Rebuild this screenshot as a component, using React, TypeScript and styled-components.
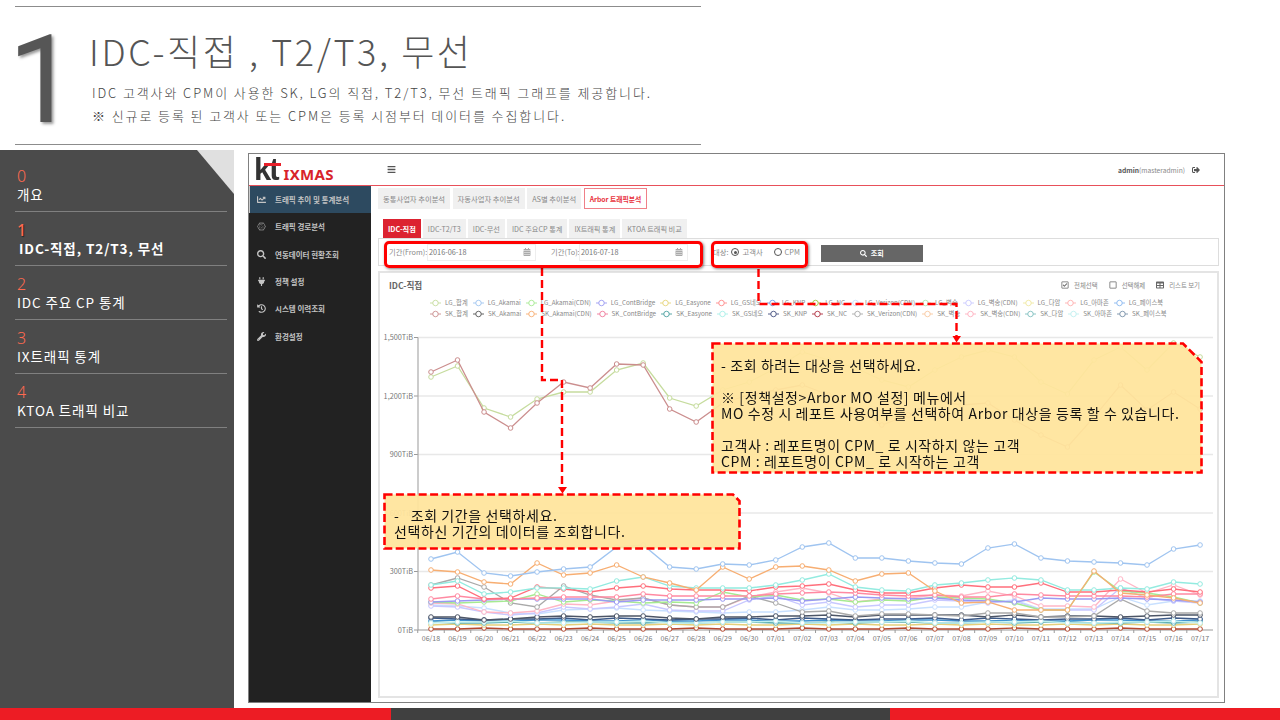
import React from "react"
import styled, { createGlobalStyle } from "styled-components"
import {
  FaBars, FaCalendarAlt, FaChartLine, FaConnectdevelop, FaHistory, FaPlug, FaRegCheckSquare,
  FaRegSquare, FaSearch, FaSignOutAlt, FaTable, FaWrench,
} from "react-icons/fa"

const KR = `"Noto Sans CJK KR", "Noto Sans", sans-serif`

const GlobalStyle = createGlobalStyle`
  html, body { margin: 0; padding: 0; background: #fff; }
  * { box-sizing: border-box; }
`

// plot heights are px above the x axis (1px is about 5.1 TiB)
const wobble = (base: number, step: number[]) => Array.from({ length: 30 }, (_, i) => base + step[i % step.length])

const lines: { color: string; h: number[] }[] = [
  { color: "#b5482f", h: wobble(1, [0, 0, 1, 0]) },
  { color: "#e6cf7a", h: wobble(5, [0, 1, 0, 0, 1]) },
  { color: "#5fb0b0", h: wobble(7, [1, 0, 0, 1, 0, 1]) },
  { color: "#3f92d0", h: wobble(9, [0, 1, 0, 0, 1, 1, 0]) },
  { color: "#3d5a88", h: wobble(10, [2, 1, 0, 1, 1, 2, 0]) },
  { color: "#c0f0f0", h: wobble(7, [0, 1, 1, 2, 0]) },
  { color: "#c8e0ff", h: [25, 24, 22, 17, 16, 20, 21, 22, 20, 19, 18, 17, 18, 18, 20, 23, 20, 20, 21, 23, 23, 28, 30, 21, 21, 21, 33, 25, 29, 29] },
  { color: "#4c5566", h: [13, 13, 10, 11, 13, 14, 13, 14, 14, 12, 11, 13, 13, 14, 14, 15, 13, 15, 15, 15, 15, 13, 15, 13, 14, 14, 13, 14, 15, 15] },
  { color: "#c8c8ff", h: [24, 23, 18, 15, 17, 23, 21, 23, 26, 20, 19, 19, 30, 34, 25, 28, 23, 25, 25, 30, 29, 27, 29, 20, 20, 20, 42, 32, 29, 27] },
  { color: "#ffb6c6", h: [27, 26, 18, 17, 19, 26, 25, 29, 32, 25, 23, 23, 33, 38, 42, 37, 28, 31, 32, 35, 34, 39, 34, 24, 24, 23, 51, 37, 45, 35] },
  { color: "#a9a9a9", h: [45, 52, 43, 27, 23, 44, 35, 30, 32, 25, 23, 23, 34, 27, 18, 19, 14, 16, 16, 15, 14, 17, 17, 13, 13, 14, 31, 19, 17, 17] },
  { color: "#a6ea92", h: [28, 27, 28, 29, 36, 28, 30, 29, 27, 28, 27, 38, 33, 35, 30, 31, 28, 30, 29, 33, 32, 31, 27, 20, 20, 58, 39, 37, 33, 27] },
  { color: "#9a9af2", h: [28, 29, 30, 31, 31, 31, 31, 28, 30, 30, 30, 31, 31, 32, 29, 31, 33, 32, 31, 32, 30, 29, 28, 32, 31, 31, 32, 31, 30, 28] },
  { color: "#ff8aa2", h: [31, 34, 31, 31, 32, 33, 33, 33, 36, 34, 34, 34, 34, 36, 37, 38, 37, 35, 34, 35, 33, 33, 36, 35, 34, 34, 34, 33, 36, 36] },
  { color: "#ff6f7c", h: [42, 44, 31, 32, 43, 41, 38, 42, 44, 41, 40, 40, 39, 43, 44, 46, 40, 37, 37, 42, 45, 43, 43, 47, 38, 38, 40, 38, 41, 38] },
  { color: "#93ebe0", h: [45, 49, 36, 38, 42, 42, 41, 49, 53, 44, 42, 42, 42, 45, 50, 56, 43, 40, 39, 45, 47, 50, 52, 50, 40, 40, 42, 41, 48, 46] },
  { color: "#f7ae72", h: [60, 58, 48, 46, 67, 55, 57, 65, 53, 47, 40, 63, 51, 63, 64, 60, 49, 56, 57, 39, 27, 28, 20, 20, 20, 59, 37, 35, 32, 27] },
  { color: "#9fc4f0", h: [71, 78, 57, 54, 58, 61, 63, 83, 85, 63, 61, 66, 65, 70, 83, 87, 72, 72, 69, 67, 66, 82, 86, 72, 69, 68, 67, 65, 81, 85] },
  { color: "#c6dc9e", h: [253, 264, 222, 213, 231, 238, 238, 260, 267, 232, 224, 240, 248, 262, 278, 270, 262, 250, 243, 260, 273, 280, 273, 248, 236, 270, 283, 260, 287, 273] },
  { color: "#cb8e8e", h: [258, 270, 218, 202, 227, 248, 242, 266, 265, 221, 208, 227, 235, 240, 245, 235, 220, 205, 215, 230, 225, 227, 210, 195, 183, 213, 245, 220, 238, 221] },
]

const legendRows = [
  [["LG_합계", "#c6dc9e"], ["LG_Akamai", "#9fc4f0"], ["LG_Akamai(CDN)", "#a6ea92"], ["LG_ContBridge", "#9a9af2"], ["LG_Easyone", "#e6d47a"], ["LG_GS네오", "#ff8a8a"], ["LG_KNP", "#6f9fe8"], ["LG_NC", "#a0c840"], ["LG_Verizon(CDN)", "#c8e0ff"], ["LG_벽송", "#b0e8b0"], ["LG_벽송(CDN)", "#c8c8ff"], ["LG_다암", "#f0e8a0"], ["LG_아마존", "#ffb0b0"], ["LG_페이스북", "#8ab8f0"]],
  [["SK_합계", "#cb8e8e"], ["SK_Akamai", "#555555"], ["SK_Akamai(CDN)", "#f7ae72"], ["SK_ContBridge", "#f07a9a"], ["SK_Easyone", "#4aa0a0"], ["SK_GS네오", "#a8f0e8"], ["SK_KNP", "#445080"], ["SK_NC", "#b03040"], ["SK_Verizon(CDN)", "#aaaaaa"], ["SK_벽송", "#f8c8a0"], ["SK_벽송(CDN)", "#ffb0c0"], ["SK_다암", "#80c0c0"], ["SK_아마존", "#c0f0f0"], ["SK_페이스북", "#7890a8"]],
]

const dates = [
  "06/18", "06/19", "06/20", "06/21", "06/22", "06/23", "06/24", "06/25", "06/26", "06/27", "06/28", "06/29", "06/30",
  "07/01", "07/02", "07/03", "07/04", "07/05", "07/06", "07/07", "07/08", "07/09", "07/10", "07/11", "07/12", "07/13",
  "07/14", "07/15", "07/16", "07/17",
]

const slideMenu = [
  { no: "0", label: "개요" },
  { no: "1", label: "IDC-직접, T2/T3, 무선", active: true },
  { no: "2", label: "IDC 주요 CP 통계" },
  { no: "3", label: "IX트래픽 통계" },
  { no: "4", label: "KTOA 트래픽 비교" },
]

const appMenu = [
  { icon: <FaChartLine />, label: "트래픽 추이 및 통계분석", active: true },
  { icon: <FaConnectdevelop />, label: "트래픽 경로분석" },
  { icon: <FaSearch />, label: "연동데이터 현황조회" },
  { icon: <FaPlug />, label: "정책 설정" },
  { icon: <FaHistory />, label: "시스템 이력조회" },
  { icon: <FaWrench />, label: "환경설정" },
]

const X0 = 51
const STEP = 26.52
const BASE = 305

const Chart = () => (
  <ChartSvg viewBox="0 0 836 370">
    {[0, 58.5, 117, 175.5, 234, 292.5].map((h, i) => (
      <g key={h}>
        {i > 0 && <line x1={38} x2={833} y1={BASE - h} y2={BASE - h} stroke="#e8e8e8" strokeWidth={1.4} />}
        <line x1={34} x2={38} y1={BASE - h} y2={BASE - h} stroke="#999" />
        <text x={33} y={BASE - h + 2.5} fontSize={7.3} textAnchor="end" fill="#777" fontFamily={KR}>
          {["0TiB", "300TiB", "600TiB", "900TiB", "1,200TiB", "1,500TiB"][i]}
        </text>
      </g>
    ))}
    <line x1={38} x2={38} y1={BASE - 292.5} y2={BASE} stroke="#aaa" strokeWidth={1.2} />
    <line x1={38} x2={833} y1={BASE} y2={BASE} stroke="#999" />
    {dates.map((d, i) => (
      <g key={d}>
        <line x1={X0 - 13.26 + i * STEP} x2={X0 - 13.26 + i * STEP} y1={BASE} y2={BASE + 3} stroke="#999" />
        <text x={X0 + i * STEP} y={BASE + 10.5} fontSize={7} textAnchor="middle" fill="#777" fontFamily={KR}>{d}</text>
      </g>
    ))}
    {lines.map((s) => (
      <g key={s.color}>
        <polyline
          points={s.h.map((h, i) => `${X0 + i * STEP},${BASE - h}`).join(" ")}
          fill="none"
          stroke={s.color}
          strokeWidth={1.3}
        />
        {s.h.map((h, i) => (
          <circle key={i} cx={X0 + i * STEP} cy={BASE - h} r={2.3} fill="#fff" stroke={s.color} />
        ))}
      </g>
    ))}
  </ChartSvg>
)

const LegendMark = ({ color }: { color: string }) => (
  <svg width="11" height="8" viewBox="0 0 12 8">
    <line x1="0" x2="12" y1="4" y2="4" stroke={color} />
    <circle cx="6" cy="4" r="3" fill="#fff" stroke={color} />
  </svg>
)

const CalloutShape = ({ w, h, cut }: { w: number; h: number; cut: number }) => (
  <ShapeSvg viewBox={`0 0 ${w} ${h}`}>
    <path
      d={`M1.5 1.5H${w - cut}L${w - 1.5} ${cut}V${h - 1.5}H1.5Z`}
      fill="#ffe49c"
      fillOpacity="0.94"
      stroke="#ff0000"
      strokeWidth="2.6"
      strokeDasharray="8 3.4"
    />
  </ShapeSvg>
)

const App = () => (
  <Page>
    <GlobalStyle />
    <Header>
      <BigNumber>1</BigNumber>
      <HeadText>
        <Title>IDC-직접 , T2/T3, 무선</Title>
        <Sub>IDC 고객사와 CPM이 사용한 SK, LG의 직접, T2/T3, 무선 트래픽 그래프를 제공합니다.</Sub>
        <Sub>※ 신규로 등록 된 고객사 또는 CPM은 등록 시점부터 데이터를 수집합니다.</Sub>
      </HeadText>
    </Header>

    <Main>
      <SlideNavWrap>
        <SlideNav>
          {slideMenu.map((m) => (
            <SlideItem key={m.no}>
              <SlideNo $active={m.active}>{m.no}</SlideNo>
              <SlideLabel $active={m.active}>{m.label}</SlideLabel>
            </SlideItem>
          ))}
        </SlideNav>
      </SlideNavWrap>

      <AppFrame>
        <TopBar>
          <Logo>
            <KtMark>kt</KtMark>
            <LogoName>IXMAS</LogoName>
          </Logo>
          <Burger><FaBars /></Burger>
          <UserName><b>admin</b>(masteradmin)</UserName>
          <Logout><FaSignOutAlt /></Logout>
        </TopBar>
        <AppBody>
          <SideMenu>
            {appMenu.map((m) => (
              <SideItem key={m.label} $active={m.active}>
                <SideIcon>{m.icon}</SideIcon>
                {m.label}
              </SideItem>
            ))}
          </SideMenu>
          <Content>
            <TabsTop>
              <TopTab>동통사업자 추이분석</TopTab>
              <TopTab>자동사업자 추이분석</TopTab>
              <TopTab>AS별 추이분석</TopTab>
              <TopTab $active>Arbor 트래픽분석</TopTab>
            </TabsTop>
            <TabsSub>
              <SubTab $active>IDC-직접</SubTab>
              <SubTab>IDC-T2/T3</SubTab>
              <SubTab>IDC-무선</SubTab>
              <SubTab>IDC 주요CP 통계</SubTab>
              <SubTab>IX트래픽 통계</SubTab>
              <SubTab>KTOA 트래픽 비교</SubTab>
            </TabsSub>
            <Filter>
              <FieldLabel>기간(From):</FieldLabel>
              <DateField>2016-06-18<FaCalendarAlt /></DateField>
              <FieldLabel>기간(To):</FieldLabel>
              <DateField>2016-07-18<FaCalendarAlt /></DateField>
              <TargetLabel>대상:</TargetLabel>
              <Radio $on />
              <RadioText>고객사</RadioText>
              <Radio />
              <RadioText>CPM</RadioText>
              <QueryButton><FaSearch />조회</QueryButton>
            </Filter>
            <ChartPanel>
              <ChartHead>
                <ChartTitle>IDC-직접</ChartTitle>
                <ChartAction><FaRegCheckSquare />전체선택</ChartAction>
                <ChartAction><FaRegSquare />선택해제</ChartAction>
                <ChartAction><FaTable />리스트 보기</ChartAction>
              </ChartHead>
              <Legend>
                {legendRows.map((row) => (
                  <LegendRow key={row[0][0]}>
                    {row.map(([name, color]) => (
                      <LegendItem key={name}>
                        <LegendMark color={color} />
                        {name}
                      </LegendItem>
                    ))}
                  </LegendRow>
                ))}
              </Legend>
              <Chart />
            </ChartPanel>
          </Content>
        </AppBody>
      </AppFrame>
    </Main>

    <Footer>
      <FootRed />
      <FootDark />
      <FootRed />
    </Footer>

    <Connectors viewBox="0 0 1280 720">
      <path d="M542 268V380H562V488" fill="none" stroke="#f00" strokeWidth="2.4" strokeDasharray="8 4" />
      <path d="M758.500 269V304H956.500V337" fill="none" stroke="#f00" strokeWidth="2.4" strokeDasharray="8 4" />
      <path d="M558 487H567L562.500 493.500Z" fill="#f00" />
      <path d="M952.500 336H961L956.500 342.500Z" fill="#f00" />
    </Connectors>
    <FromToBox />
    <TargetBox />
    <TargetCallout>
      <CalloutShape w={492} h={132} cut={20} />
      <CalloutText>- 조회 하려는 대상을 선택하세요.</CalloutText>
      <CalloutGap />
      <CalloutText>※ [정책설정&gt;Arbor MO 설정] 메뉴에서</CalloutText>
      <CalloutText>MO 수정 시 레포트 사용여부를 선택하여 Arbor 대상을 등록 할 수 있습니다.</CalloutText>
      <CalloutGap />
      <CalloutText>고객사 : 레포트명이 CPM_ 로 시작하지 않는 고객</CalloutText>
      <CalloutText>CPM : 레포트명이 CPM_ 로 시작하는 고객</CalloutText>
    </TargetCallout>
    <PeriodCallout>
      <CalloutShape w={358} h={57} cut={8} />
      <CalloutText>-&nbsp;&nbsp;&nbsp;조회 기간을 선택하세요.</CalloutText>
      <CalloutText>선택하신 기간의 데이터를 조회합니다.</CalloutText>
    </PeriodCallout>
  </Page>
)

export default App

const Page = styled.div`
  position: relative;
  width: 1280px;
  height: 720px;
  overflow: hidden;
  display: flex;
  flex-direction: column;
  font-family: ${KR};
  background: #fff;
`

const Header = styled.header`
  display: flex;
  width: 686px;
  height: 139px;
  margin: 6px 0 0 15px;
  border-top: 1px solid #8c8c8c;
  border-bottom: 1px solid #8c8c8c;
`

const BigNumber = styled.div`
  flex: none;
  width: 75px;
  margin: 14px 0 0 -7px;
  font: 400 122px/120px Roboto, sans-serif;
  color: #565656;
  text-shadow: 2px 2px 3px #999;
`

const HeadText = styled.div`
  padding: 18px 0 0 6px;
`

const Title = styled.h1`
  margin: 0 0 6px;
  font: 300 36px/50px ${KR};
  letter-spacing: 2.6px;
  color: #555;
  white-space: pre;
`

const Sub = styled.div`
  padding-left: 3px;
  font: 300 13px/23px ${KR};
  letter-spacing: 1.9px;
  color: #444;
  white-space: pre;
`

const Main = styled.main`
  flex: 1;
  display: flex;
  margin-top: 5px;
  min-height: 0;
`

const SlideNavWrap = styled.nav`
  width: 234px;
  flex: none;
  background: #e0e0e0;
`

const SlideNav = styled.div`
  height: 100%;
  padding: 8px 7px 0 15px;
  background: #4b4b4b;
  clip-path: polygon(0 0, 197px 0, 234px 44px, 234px 100%, 0 100%);
`

const SlideItem = styled.div`
  height: 54px;
  padding: 9px 0 0 2px;
  border-bottom: 1px solid #808080;
`

const SlideNo = styled.div<{ $active?: boolean }>`
  font: ${(p) => (p.$active ? 500 : 300)} 16px/18px "Noto Sans", sans-serif;
  color: #ff6a50;
  text-shadow: ${(p) => (p.$active ? "1px 1px 1px #222" : "none")};
`

const SlideLabel = styled.div<{ $active?: boolean }>`
  padding-left: ${(p) => (p.$active ? "2px" : "0")};
  font: ${(p) => (p.$active ? 700 : 400)} 13.5px/18px ${KR};
  letter-spacing: 0.9px;
  color: #fff;
  white-space: nowrap;
`

const AppFrame = styled.section`
  display: flex;
  flex-direction: column;
  width: 977px;
  height: 550px;
  margin: 3px 0 0 14px;
  border: 1px solid #808080;
  background: #fff;
  filter: blur(0.35px);
  font-family: ${KR};
`

const TopBar = styled.div`
  display: flex;
  align-items: center;
  flex: none;
  height: 32px;
  padding: 0 24px 0 5px;
  border-bottom: 1px solid #e8505a;
  color: #555;
`

const Logo = styled.div`
  display: flex;
  align-items: flex-end;
  width: 133px;
`

const KtMark = styled.span`
  position: relative;
  font: 700 31px/24px "Liberation Sans", sans-serif;
  letter-spacing: -2px;
  color: #333;
  &::after {
    content: "";
    position: absolute;
    top: 5px;
    left: 10px;
    width: 17px;
    height: 3px;
    background: #e8202a;
  }
`

const LogoName = styled.span`
  margin-left: 6px;
  font: 700 15px/15px "Noto Sans", sans-serif;
  letter-spacing: 0.3px;
  color: #d8232a;
`

const Burger = styled.div`
  display: flex;
  font-size: 9px;
  color: #555;
`

const UserName = styled.div`
  margin-left: auto;
  font-size: 6.7px;
  color: #888;
  b { color: #555; }
`

const Logout = styled.div`
  display: flex;
  margin-left: 7px;
  font-size: 8px;
`

const AppBody = styled.div`
  flex: 1;
  display: flex;
  min-height: 0;
`

const SideMenu = styled.div`
  width: 122px;
  flex: none;
  background: #222;
`

const SideItem = styled.div<{ $active?: boolean }>`
  display: flex;
  align-items: center;
  height: 27.3px;
  padding-left: ${(p) => (p.$active ? "5px" : "6px")};
  border-left: ${(p) => (p.$active ? "1px solid #ccc" : "0")};
  background: ${(p) => (p.$active ? "#2d4a60" : "transparent")};
  font-size: 7.5px;
  font-weight: 700;
  color: #c4c4c4;
  white-space: nowrap;
`

const SideIcon = styled.span`
  display: flex;
  justify-content: center;
  width: 13px;
  margin-right: 7px;
  font-size: 9px;
`

const Content = styled.div`
  flex: 1;
  min-width: 0;
  padding: 2px 5px 5px 7px;
`

const TabsTop = styled.div`
  display: flex;
  gap: 2.5px;
  height: 21px;
`

const TopTab = styled.div<{ $active?: boolean }>`
  display: flex;
  align-items: center;
  padding: 0 5px;
  background: ${(p) => (p.$active ? "#fff" : "#f0f0f0")};
  border: ${(p) => (p.$active ? "1px solid #f08088" : "0")};
  font-size: ${(p) => (p.$active ? "6.8px" : "7.3px")};
  font-weight: ${(p) => (p.$active ? 700 : 400)};
  color: ${(p) => (p.$active ? "#e8323c" : "#888")};
  white-space: nowrap;
`

const TabsSub = styled.div`
  display: flex;
  gap: 2px;
  height: 19px;
  margin: 10px 0 0 5px;
`

const SubTab = styled.div<{ $active?: boolean }>`
  display: flex;
  align-items: center;
  padding: 0 5px;
  background: ${(p) => (p.$active ? "#dc2230" : "#f0f0f0")};
  font-size: 7.2px;
  font-weight: ${(p) => (p.$active ? 700 : 400)};
  color: ${(p) => (p.$active ? "#fff" : "#888")};
  white-space: nowrap;
`

const Filter = styled.div`
  display: flex;
  align-items: center;
  height: 28px;
  padding-left: 10px;
  border: 1px solid #ddd;
  font-size: 7.3px;
  color: #888;
`

const FieldLabel = styled.span`
  width: 38px;
  white-space: nowrap;
  & ~ & { margin-left: 15px; width: 28px; }
`

const DateField = styled.div`
  display: flex;
  align-items: center;
  justify-content: space-between;
  width: 109px;
  height: 17px;
  padding: 0 4px 0 1px;
  border: 1px solid #eee;
  color: #777;
  svg { font-size: 8px; color: #aaa; }
`

const TargetLabel = styled.span`
  margin: 0 3px 0 25px;
  white-space: nowrap;
`

const Radio = styled.span<{ $on?: boolean }>`
  display: flex;
  align-items: center;
  justify-content: center;
  width: 8px;
  height: 8px;
  border: 1px solid #555;
  border-radius: 50%;
  &::after {
    content: "";
    width: 3px;
    height: 3px;
    border-radius: 50%;
    background: ${(p) => (p.$on ? "#555" : "transparent")};
  }
`

const RadioText = styled.span`
  margin: 0 11px 0 3px;
  white-space: nowrap;
`

const QueryButton = styled.div`
  display: flex;
  align-items: center;
  justify-content: center;
  gap: 4px;
  width: 102px;
  height: 17px;
  margin: 2px 0 0 10px;
  background: #666;
  font-size: 7px;
  font-weight: 700;
  color: #fff;
  svg { font-size: 7px; }
`

const ChartPanel = styled.div`
  height: 427px;
  margin-top: 5px;
  border: 2px solid #e4e4e4;
  overflow: hidden;
`

const ChartHead = styled.div`
  display: flex;
  align-items: center;
  gap: 11px;
  height: 20px;
  margin-top: 2px;
  padding: 0 17px 0 9px;
`

const ChartTitle = styled.div`
  margin-right: auto;
  font-size: 8.6px;
  font-weight: 700;
  color: #666;
`

const ChartAction = styled.div`
  display: flex;
  align-items: center;
  gap: 5px;
  font-size: 6.4px;
  color: #888;
  svg { font-size: 8px; color: #666; }
`

const Legend = styled.div`
  margin-top: 2px;
  padding-left: 50px;
`

const LegendRow = styled.div`
  display: flex;
  gap: 5px;
  height: 11px;
`

const LegendItem = styled.div`
  display: flex;
  align-items: center;
  gap: 4px;
  font-size: 6.3px;
  line-height: 11px;
  color: #888;
  white-space: nowrap;
`

const ChartSvg = styled.svg`
  display: block;
  width: 836px;
  height: 370px;
  margin-top: 6px;
`

const Footer = styled.footer`
  display: flex;
  flex: none;
  height: 12px;
`

const FootRed = styled.div`
  flex: 1;
  background: #ed1c24;
  &:first-child { flex: 0 0 391px; }
`

const FootDark = styled.div`
  flex: 0 0 499px;
  background: #404040;
`

const Connectors = styled.svg`
  position: absolute;
  inset: 0;
  width: 1280px;
  height: 720px;
  pointer-events: none;
`

const Highlight = styled.div`
  position: absolute;
  border: 3px solid #f00;
  border-radius: 5px;
  box-shadow: 1px 1px 3px rgba(0, 0, 0, 0.5);
`

const FromToBox = styled(Highlight)`
  left: 384px;
  top: 241px;
  width: 319px;
  height: 27px;
`

const TargetBox = styled(Highlight)`
  left: 711px;
  top: 241px;
  width: 97px;
  height: 27px;
`

const Callout = styled.div`
  position: absolute;
  display: flex;
  flex-direction: column;
  color: #111;
`

const TargetCallout = styled(Callout)`
  left: 711px;
  top: 342px;
  width: 492px;
  height: 132px;
  padding: 15px 0 0 10px;
`

const PeriodCallout = styled(Callout)`
  left: 383px;
  top: 493px;
  width: 358px;
  height: 57px;
  padding: 14px 0 0 11px;
`

const ShapeSvg = styled.svg`
  position: absolute;
  inset: 0;
  width: 100%;
  height: 100%;
`

const CalloutText = styled.div`
  position: relative;
  font: 400 14px/16px ${KR};
  letter-spacing: 0.6px;
  white-space: pre;
`

const CalloutGap = styled.div`
  height: 16px;
`
